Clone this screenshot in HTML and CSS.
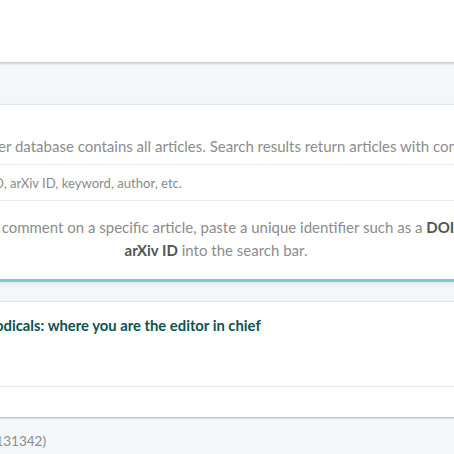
FILE: index.html
```html
<!DOCTYPE html>
<html>
<head>
<meta charset="utf-8">
<link rel="stylesheet" href="styles.css">
</head>
<body>
<div class="page">
  <header class="header"></header>
  <div class="band"></div>
  <section class="search-card">
    <p class="lead">The PubPeer database contains all articles. Search results return articles with comments.</p>
    <div class="search-box">
      <input class="search-input" type="text" placeholder="DOI, PMID, arXiv ID, keyword, author, etc.">
    </div>
    <p class="hint">If you would like to comment on a specific article, paste a unique identifier such as a <b>DOI</b>, <b>PubMed ID</b>, or <b>arXiv ID</b> into the search bar.</p>
  </section>
  <div class="gap"></div>
  <section class="feature">
    <div class="feature-body">
      <h3 class="feature-title">PubPeer Periodicals: where you are the editor in chief</h3>
    </div>
    <div class="feature-foot"></div>
  </section>
  <footer class="footer">
    <p class="footer-text">Featured comments (PMID 131342)</p>
  </footer>
</div>
</body>
</html>
```
FILE: styles.css
```css
html, body {
  margin: 0;
  padding: 0;
  overflow: hidden;
  background: #f4f7fa;
}
.page {
  width: 900px;
  margin-left: -234px;
  font-family: "Lato", "Open Sans", sans-serif;
}
.header {
  height: 62px;
  background: #ffffff;
  box-shadow: 0 1px 3px rgba(0, 0, 0, 0.28);
  position: relative;
  z-index: 2;
}
.band {
  height: 42px;
  background: #f4f7fa;
  border-bottom: 1px solid #e6e9ec;
}
.search-card {
  background: #ffffff;
  border-bottom: 3px solid #7dcdc7;
  box-shadow: 0 2px 5px rgba(0, 0, 0, 0.08);
  text-align: center;
  color: #8c8c8c;
  font-size: 15px;
  position: relative;
  z-index: 1;
}
.lead {
  margin: 0;
  padding: 30px 0 6px;
  line-height: 23px;
  white-space: nowrap;
}
.search-box {
  border-top: 1px solid #ebebeb;
  border-bottom: 1px solid #ebebeb;
  height: 35px;
  display: flex;
  align-items: center;
}
.search-input {
  border: none;
  outline: none;
  background: transparent;
  width: 100%;
  font-family: inherit;
  font-size: 13.1px;
  padding: 0 0 0 174px;
  margin: 0;
  color: #888;
}
.search-input::placeholder {
  color: #8a8a8a;
}
.hint {
  margin: 0 auto;
  width: 690px;
  padding: 15px 0 17px;
  line-height: 23px;
}
.hint b {
  color: #555;
  font-weight: 700;
}
.gap {
  height: 19px;
  background: #f4f7fa;
  border-bottom: 1px solid #e6e9ec;
}
.feature {
  background: #ffffff;
  box-shadow: 0 1px 2px rgba(0, 0, 0, 0.3);
}
.feature-body {
  height: 84px;
  border-bottom: 1px solid #e8e8e8;
  padding-left: 144px;
}
.feature-title {
  margin: 0;
  padding-top: 14px;
  font-size: 14.8px;
  line-height: 18px;
  font-weight: 700;
  color: #0c5350;
}
.feature-foot {
  height: 30px;
}
.footer {
  padding-top: 14px;
}
.footer-text {
  margin: 0;
  width: 280px;
  text-align: right;
  font-size: 13.5px;
  color: #8c8c8c;
  line-height: 20px;
}
```
